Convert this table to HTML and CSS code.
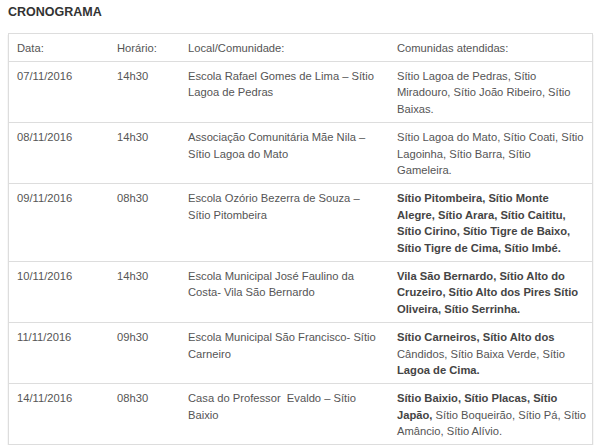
FILE: index.html
```html
<!DOCTYPE html>
<html lang="pt">
<head>
<meta charset="utf-8">
<link rel="stylesheet" href="styles.css">
</head>
<body>
<h3 class="title">CRONOGRAMA</h3>
<table class="schedule">
  <thead>
    <tr><th>Data:</th><th>Horário:</th><th>Local/Comunidade:</th><th>Comunidas atendidas:</th></tr>
  </thead>
  <tbody>
    <tr><td>07/11/2016</td><td>14h30</td><td>Escola Rafael Gomes de Lima – Sítio Lagoa de Pedras</td><td>Sítio Lagoa de Pedras, Sítio Miradouro, Sítio João Ribeiro, Sítio Baixas.</td></tr>
    <tr><td>08/11/2016</td><td>14h30</td><td>Associação Comunitária Mãe Nila – Sítio Lagoa do Mato</td><td>Sítio Lagoa do Mato, Sítio Coati, Sítio Lagoinha, Sítio Barra, Sítio Gameleira.</td></tr>
    <tr><td>09/11/2016</td><td>08h30</td><td>Escola Ozório Bezerra de Souza – Sítio Pitombeira</td><td><b>Sítio Pitombeira, Sítio Monte Alegre, Sítio Arara, Sítio Caititu, Sítio Cirino, Sítio Tigre de Baixo, Sítio Tigre de Cima, Sítio Imbé.</b></td></tr>
    <tr><td>10/11/2016</td><td>14h30</td><td>Escola Municipal José Faulino da Costa- Vila São Bernardo</td><td><b>Vila São Bernardo, Sítio Alto do Cruzeiro, Sítio Alto dos Pires Sítio Oliveira, Sítio Serrinha.</b></td></tr>
    <tr><td>11/11/2016</td><td>09h30</td><td>Escola Municipal São Francisco- Sítio Carneiro</td><td><b>Sítio Carneiros, Sítio Alto dos</b> Cândidos, Sítio Baixa Verde, Sítio <b>Lagoa de Cima.</b></td></tr>
    <tr><td>14/11/2016</td><td>08h30</td><td>Casa do Professor&nbsp; Evaldo – Sítio Baixio</td><td><b>Sítio Baixio, Sítio Placas, Sítio Japão,</b> Sítio Boqueirão, Sítio Pá, Sítio Amâncio, Sítio Alívio.</td></tr>
  </tbody>
</table>
</body>
</html>
```
FILE: styles.css
```css
html, body {
  margin: 0;
  padding: 0;
  background: #fff;
}
body {
  padding: 4px 8px 0 8px;
  font-family: "Liberation Sans", Arial, sans-serif;
  color: #555;
}
.title {
  margin: 0 0 13px 0;
  font-size: 12.5px;
  font-weight: bold;
  color: #333;
  line-height: 16px;
}
.schedule {
  width: 585px;
  border-collapse: collapse;
  border: 1px solid #ddd;
  box-shadow: 0 2px 1px #ccc;
  font-size: 11.2px;
  line-height: 16.7px;
}
.schedule th,
.schedule td {
  text-align: left;
  vertical-align: top;
  padding: 6px 8px 4px 8px;
  font-weight: normal;
  border-top: 1px solid #ddd;
}
.schedule th:nth-child(4),
.schedule td:nth-child(4) {
  padding-right: 5px;
}
.schedule th:nth-child(1) { width: 84px; }
.schedule th:nth-child(2) { width: 55px; }
.schedule th:nth-child(3) { width: 193px; }
.schedule td b {
  font-weight: bold;
  color: #444;
}
```
